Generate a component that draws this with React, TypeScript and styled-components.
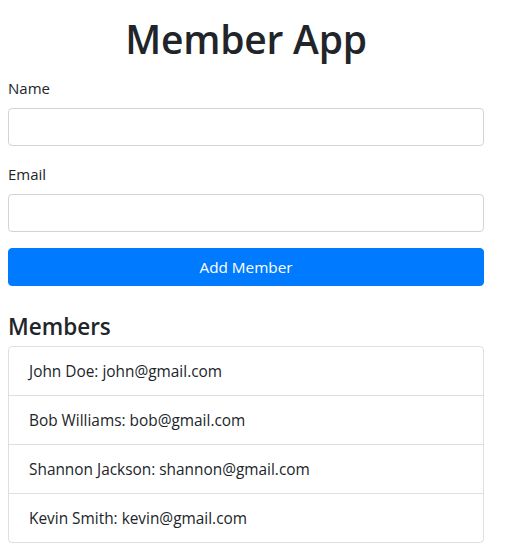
import React from "react";
import styled, { createGlobalStyle } from "styled-components";

const Global = createGlobalStyle`
  * { box-sizing: border-box; }
  body {
    margin: 8px;
    background: #fff;
    color: #212529;
    font-family: "Open Sans", "Noto Sans", sans-serif;
    font-size: 16px;
    line-height: 1.5;
  }
`;

const Container = styled.div`
  width: 476px;
  padding-top: 7px;
`;

const Title = styled.h1`
  margin: 0 0 13px;
  font-size: 39px;
  font-weight: 600;
  line-height: 48px;
  text-align: center;
  letter-spacing: -0.2px;
`;

const FormGroup = styled.div`
  margin-bottom: 16px;
`;

const Label = styled.label`
  display: block;
  margin-bottom: 8px;
  font-size: 15px;
  line-height: 24px;
`;

const Input = styled.input`
  display: block;
  width: 100%;
  height: 38px;
  padding: 6px 12px;
  border: 1px solid #ced4da;
  border-radius: 4px;
  font: inherit;
  color: #495057;
  background: #fff;
`;

const Button = styled.button`
  display: block;
  width: 100%;
  height: 38px;
  border: 1px solid #007bff;
  border-radius: 4px;
  background: #007bff;
  color: #fff;
  font: inherit;
  font-size: 15.3px;
  cursor: pointer;
`;

const Heading = styled.h4`
  margin: 26px 0 5px;
  font-size: 22.5px;
  font-weight: 600;
  line-height: 29px;
`;

const List = styled.ul`
  margin: 0;
  padding: 0;
  list-style: none;
  border: 1px solid rgba(0, 0, 0, 0.125);
  border-radius: 4px;
`;

const Item = styled.li`
  padding: 13px 20px 11px;
  font-size: 15.4px;
  line-height: 24px;
  & + & {
    border-top: 1px solid rgba(0, 0, 0, 0.125);
  }
`;

const members = [
  { name: "John Doe", email: "john@gmail.com" },
  { name: "Bob Williams", email: "bob@gmail.com" },
  { name: "Shannon Jackson", email: "shannon@gmail.com" },
  { name: "Kevin Smith", email: "kevin@gmail.com" },
];

export default function App() {
  return (
    <>
      <Global />
      <Container>
        <Title>Member App</Title>
        <form onSubmit={(e) => e.preventDefault()}>
          <FormGroup>
            <Label htmlFor="name">Name</Label>
            <Input id="name" type="text" />
          </FormGroup>
          <FormGroup>
            <Label htmlFor="email">Email</Label>
            <Input id="email" type="email" />
          </FormGroup>
          <Button type="submit">Add Member</Button>
        </form>
        <Heading>Members</Heading>
        <List>
          {members.map((m) => (
            <Item key={m.email}>
              {m.name}: {m.email}
            </Item>
          ))}
        </List>
      </Container>
    </>
  );
}
